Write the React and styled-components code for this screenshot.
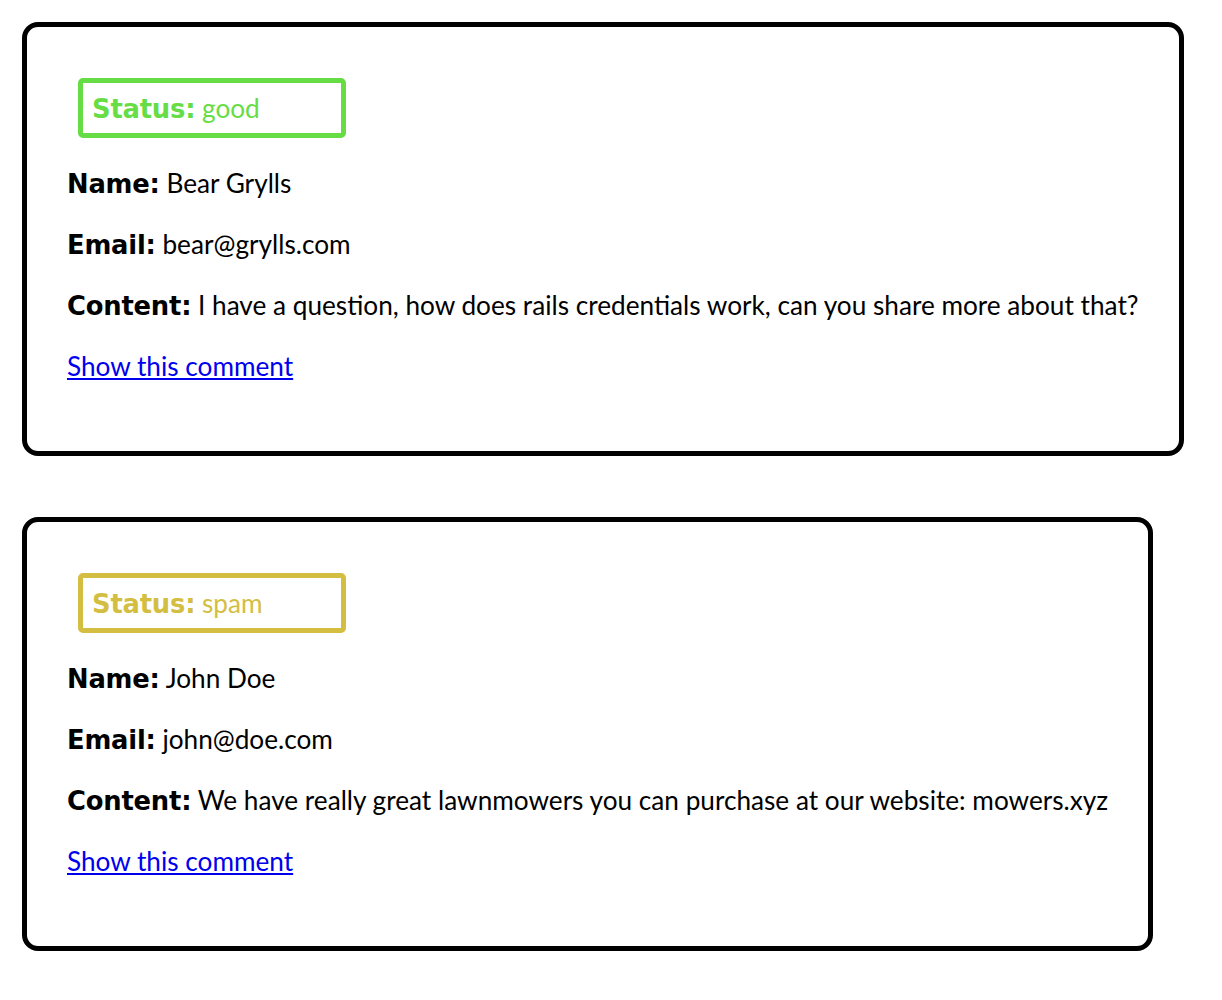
import React from "react";
import styled, { createGlobalStyle } from "styled-components";

const GlobalStyle = createGlobalStyle`
  html, body {
    margin: 0;
    padding: 0;
    background: #ffffff;
  }
  body {
    font-family: "Lato", "Open Sans", sans-serif;
    color: #000000;
  }
`;

const Page = styled.main`
  display: flex;
  flex-direction: column;
  align-items: flex-start;
  gap: 61px;
  padding: 22px 0 40px 22px;
`;

const Card = styled.article`
  width: fit-content;
  display: flex;
  flex-direction: column;
  gap: 29px;
  padding: 51px 40px 69px 40px;
  border: 5px solid #000000;
  border-radius: 16px;
  box-sizing: border-box;
`;

const StatusBox = styled.div`
  box-sizing: border-box;
  width: 268px;
  height: 60px;
  margin-left: 11px;
  padding: 0 9px;
  border: 5px solid ${(p) => p.$color};
  border-radius: 5px;
  color: ${(p) => p.$color};
  font-size: 26.2px;
  line-height: 50px;
  white-space: nowrap;
  overflow: hidden;
`;

const Row = styled.p`
  margin: 0;
  height: 32px;
  font-size: 26.2px;
  line-height: 32px;
  white-space: nowrap;
`;

const Label = styled.strong`
  font-family: "DejaVu Sans", "Lato", sans-serif;
  font-weight: 700;
  font-size: 25.8px;
  line-height: 1;
  letter-spacing: -0.2px;
`;

const ShowLink = styled.a`
  color: #0000ee;
  text-decoration: underline;
  text-underline-offset: 2px;
  text-decoration-thickness: 1.5px;
`;

const STATUS_COLORS = {
  good: "#66dd44",
  spam: "#d4be42",
};

const comments = [
  {
    id: 1,
    status: "good",
    name: "Bear Grylls",
    email: "bear@grylls.com",
    content:
      "I have a question, how does rails credentials work, can you share more about that?",
  },
  {
    id: 2,
    status: "spam",
    name: "John Doe",
    email: "john@doe.com",
    content:
      "We have really great lawnmowers you can purchase at our website: mowers.xyz",
  },
];

function Comment({ comment }) {
  return (
    <Card>
      <StatusBox $color={STATUS_COLORS[comment.status]}>
        <Label>Status:</Label> {comment.status}
      </StatusBox>
      <Row>
        <Label>Name:</Label> {comment.name}
      </Row>
      <Row>
        <Label>Email:</Label> {comment.email}
      </Row>
      <Row>
        <Label>Content:</Label> {comment.content}
      </Row>
      <Row>
        <ShowLink href={`#comment-${comment.id}`}>Show this comment</ShowLink>
      </Row>
    </Card>
  );
}

export default function App() {
  return (
    <>
      <GlobalStyle />
      <Page>
        {comments.map((c) => (
          <Comment key={c.id} comment={c} />
        ))}
      </Page>
    </>
  );
}
